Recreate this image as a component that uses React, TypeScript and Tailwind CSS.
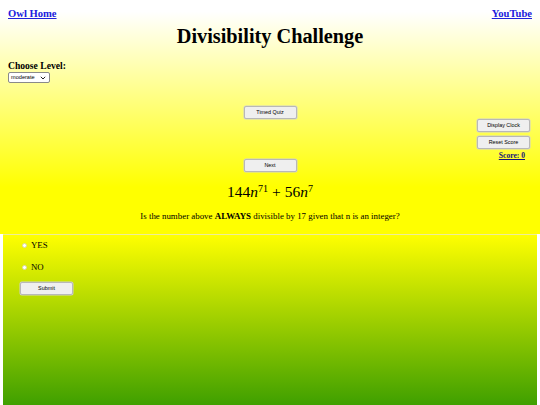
import React from "react";

const serif = { fontFamily: '"Liberation Serif", "Times New Roman", serif' };
const sans = { fontFamily: '"Liberation Sans", Arial, sans-serif' };

function Btn({ children, className = "" }: { children: React.ReactNode; className?: string }) {
  return (
    <button
      style={sans}
      className={`h-[13px] w-[53px] rounded-[2px] border border-[#b8b8b8] bg-[#efefef] text-[5.4px] leading-none text-black shadow-[0_0_0_0.5px_#d0d0d0] ${className}`}
    >
      {children}
    </button>
  );
}

export default function App() {
  return (
    <div className="w-[540px] min-h-[405px] overflow-hidden bg-white" style={serif}>
      <div className="h-[234px] bg-[linear-gradient(to_bottom,#ffffff_0%,#ffffff_5%,#ffff00_80%,#ffff00_100%)] px-[8px] pt-[7px]">
        <div className="flex justify-between text-[10.6px] font-bold leading-[13px]">
          <a href="#" className="text-[#2020dd] underline">Owl Home</a>
          <a href="#" className="text-[#2020dd] underline">YouTube</a>
        </div>
        <h1 className="mt-[4px] text-center text-[20.3px] font-bold leading-[24px] text-black">
          Divisibility Challenge
        </h1>
        <div className="mt-[12px] text-[9.6px] font-bold leading-[11px] text-black">Choose Level:</div>
        <div className="mt-[1px] flex">
          <div
            style={sans}
            className="flex h-[11px] w-[42px] items-center justify-between rounded-[2px] border border-[#8a8a8a] bg-white pl-[2px] pr-[3px] text-[5.6px] text-black"
          >
            <span>moderate</span>
            <svg width="6" height="4" viewBox="0 0 6 4">
              <path d="M0.8 0.8 L3 3 L5.2 0.8" fill="none" stroke="#222" strokeWidth="1" />
            </svg>
          </div>
        </div>
        <div className="mt-[23px] grid grid-cols-[1fr_auto_1fr]">
          <div />
          <div className="flex flex-col">
            <Btn>Timed Quiz</Btn>
            <div className="h-[40px]" />
            <Btn>Next</Btn>
          </div>
          <div className="flex flex-col items-end pr-[2px] pt-[13px]">
            <Btn>Display Clock</Btn>
            <Btn className="mt-[4px]">Reset Score</Btn>
            <a href="#" className="mr-[5px] mt-[2px] text-[7.6px] font-bold leading-[9px] text-[#15157a] underline">
              Score: 0
            </a>
          </div>
        </div>
        <div className="mt-[10px] text-center text-[15.5px] leading-[20px] text-black">
          <span>144</span>
          <i>n</i>
          <sup className="text-[10px]">71</sup>
          <span className="mx-[4px]">+</span>
          <span>56</span>
          <i>n</i>
          <sup className="text-[10px]">7</sup>
        </div>
        <div className="mt-[9px] text-center text-[8.9px] leading-[11px] text-black">
          Is the number above <b>ALWAYS</b> divisible by 17 given that n is an integer?
        </div>
      </div>
      <div className="mx-[3px] h-[227px] border-t border-[#eded9a] bg-[linear-gradient(to_bottom,#ffff00,#008000)] pl-[17px] pt-[4px]">
        <div className="flex items-center gap-[4px] text-[8.8px] leading-[12px] text-black">
          <span className="ml-[2px] inline-block h-[5px] w-[5px] rounded-full border border-[#d8d8a0] bg-white" />
          <span>YES</span>
        </div>
        <div className="mt-[10px] flex items-center gap-[4px] text-[8.8px] leading-[12px] text-black">
          <span className="ml-[2px] inline-block h-[5px] w-[5px] rounded-full border border-[#d8d8a0] bg-white" />
          <span>NO</span>
        </div>
        <div className="mt-0">
          <Btn className="w-[52px]">Submit</Btn>
        </div>
      </div>
    </div>
  );
}
